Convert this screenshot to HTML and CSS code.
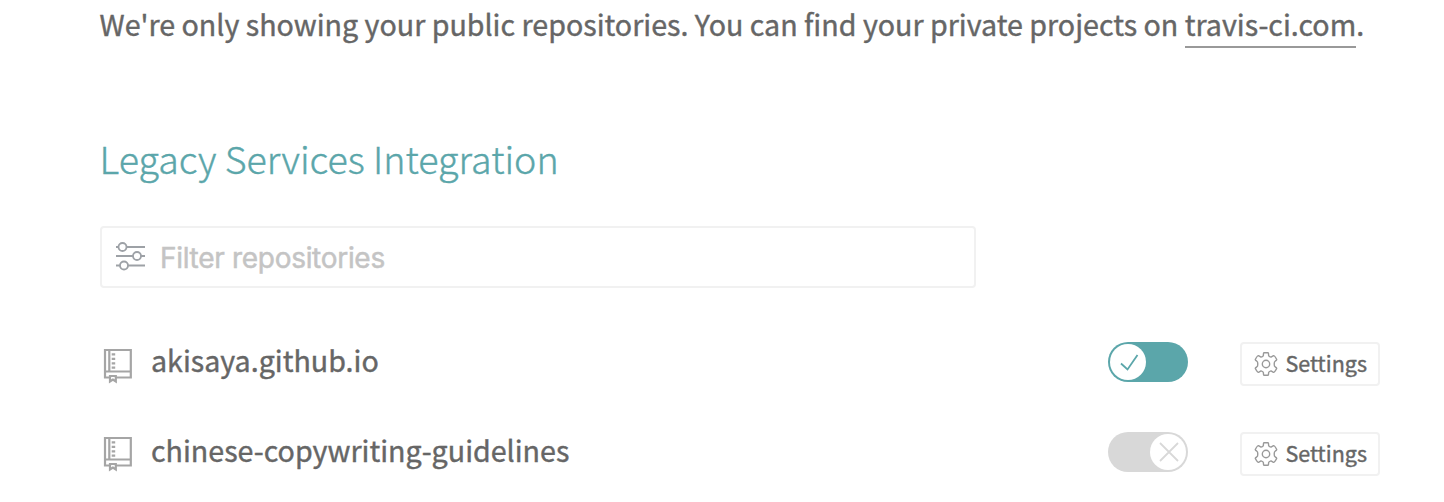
FILE: index.html
```html
<!DOCTYPE html>
<html lang="en">
<head>
<meta charset="utf-8">
<title>Repositories</title>
<link rel="stylesheet" href="styles.css">
</head>
<body>
<svg class="defs" width="0" height="0" aria-hidden="true">
  <symbol id="book" viewBox="0 0 30 36">
    <g fill="none" stroke="#a5a5a5" stroke-width="2.200">
      <path d="M6.500 29.500H2V2H27.800V29.500H13M6.300 2V23.500M2 23.500H28"/>
      <path d="M8.700 6.300H12.200M8.700 10.900H12.200M8.700 15.300H12.200M8.700 19.700H12.200"/>
      <path d="M7 33.500V28H12.800V33.500L9.900 31.500Z"/>
    </g>
  </symbol>
  <symbol id="gear" viewBox="0 0 24 24">
    <g fill="none" stroke="#999" stroke-width="1.400" stroke-linejoin="round">
      <path d="M10 .8H14Q14.600 .8 14.600 3.300Q14.800 4.500 17 5.100L19.500 3.700Q20.400 3.300 22.600 7.300Q23 8.200 21.300 9Q20 9.800 20.300 12Q20 14.200 21.300 15Q23 15.800 22.600 16.700Q20.400 20.700 19.500 20.300L17 18.900Q14.800 19.500 14.600 20.700Q14.600 23.200 14 23.200H10Q9.400 23.200 9.400 20.700Q9.200 19.500 7 18.900L4.500 20.300Q3.600 20.700 1.400 16.700Q1 15.800 2.700 15Q4 14.200 3.700 12Q4 9.800 2.700 9Q1 8.200 1.400 7.300Q3.600 3.300 4.500 3.700L7 5.100Q9.200 4.500 9.400 3.300Q9.400 .8 10 .8Z"/>
      <circle cx="12" cy="12" r="3.700"/>
    </g>
  </symbol>
</svg>
<main class="page">
  <p class="notice"><span>We're only showing your public repositories. You can find your private projects on </span><a class="link">travis-ci.com</a>.</p>
  <h2 class="title">Legacy Services Integration</h2>
  <div class="filter">
    <svg class="sliders" width="30" height="30" viewBox="0 0 30 30" fill="none" stroke="#9da1a6" stroke-width="1.800">
      <path d="M0 6H3M11 6H29M0 15H17M25 15H29M0 24.500H4M12 24.500H29"/>
      <circle cx="6.500" cy="6" r="4"/><circle cx="21" cy="15" r="4"/><circle cx="8" cy="24.500" r="4"/>
    </svg>
    <span class="placeholder">Filter repositories</span>
  </div>
  <ul class="repos">
    <li class="repo">
      <svg class="book book-low"><use href="#book"/></svg>
      <span class="name">akisaya.github.io</span>
      <span class="toggle on"><span class="knob"><svg width="36" height="36" viewBox="0 0 36 36"><path d="M11 19.500L17.500 25.500L27.500 11"/></svg></span></span>
      <a class="settings"><svg class="gear"><use href="#gear"/></svg><span>Settings</span></a>
    </li>
    <li class="repo">
      <svg class="book"><use href="#book"/></svg>
      <span class="name">chinese-copywriting-guidelines</span>
      <span class="toggle"><span class="knob"><svg width="36" height="36" viewBox="0 0 36 36"><path d="M10 9L28 27M28 9L10 27"/></svg></span></span>
      <a class="settings"><svg class="gear"><use href="#gear"/></svg><span>Settings</span></a>
    </li>
  </ul>
</main>
</body>
</html>
```
FILE: styles.css
```css
* { box-sizing: border-box; }
body { margin: 0; background: #fff; color: #666; font-family: "Noto Sans CJK SC", sans-serif; overflow: hidden; }
.defs { display: block; }
.page { width: 1444px; height: 502px; padding-left: 99.5px; overflow: hidden; }
.notice { margin: 0; height: 48px; line-height: 48px; font-size: 28.64px; font-weight: 400; -webkit-text-stroke: .4px #666; white-space: nowrap; }
.link { display: inline-block; height: 48px; border-bottom: 2px solid #999; vertical-align: top; }
.title { margin: 80px 0 0; height: 60px; line-height: 60px; font-size: 37.6px; font-weight: 300; color: #5ba6aa; -webkit-text-stroke: .4px #5ba6aa; white-space: nowrap; }
.filter { display: flex; align-items: center; width: 876px; height: 62px; margin: 38px 0 0 .5px; padding-left: 14px; border: 2px solid #f1f1f1; border-radius: 4px; }
.sliders { margin-top: -2px; }
.placeholder { margin: 2px 0 0 14px; font: 400 28px/40px Inter, sans-serif; letter-spacing: -.3px; color: #c4c4c4; -webkit-text-stroke: .5px #c4c4c4; }
.repos { margin: 49px 0 0 .5px; padding: 0; list-style: none; }
.repo { display: flex; align-items: center; height: 50px; margin-bottom: 40px; }
.book { width: 30px; height: 36px; margin: 4px 0 0 3px; }
.book-low { margin-top: 8px; }
.name { flex: 0 0 957px; margin: -4px 0 0 18px; line-height: 50px; font-size: 28.64px; font-weight: 400; -webkit-text-stroke: .4px #666; }
.toggle { display: flex; justify-content: flex-end; width: 80px; height: 40px; padding: 2px; border-radius: 20px; background: #d8d8d8; }
.toggle.on { justify-content: flex-start; background: #5ba6aa; }
.knob { width: 36px; height: 36px; border-radius: 50%; background: #fff; }
.knob svg { display: block; fill: none; stroke: #d8d8d8; stroke-width: 1.8; }
.on .knob svg { stroke: #5ba6aa; }
.settings { display: flex; align-items: center; width: 140px; height: 44px; margin: 4px 0 0 52px; padding-left: 12px; border: 2px solid #f1f1f1; border-radius: 4px; font-size: 21.5px; font-weight: 400; -webkit-text-stroke: .4px #666; line-height: 36px; }
.settings span { margin-top: -2px; }
.gear { width: 24px; height: 24px; margin-right: 7.5px; }
```
